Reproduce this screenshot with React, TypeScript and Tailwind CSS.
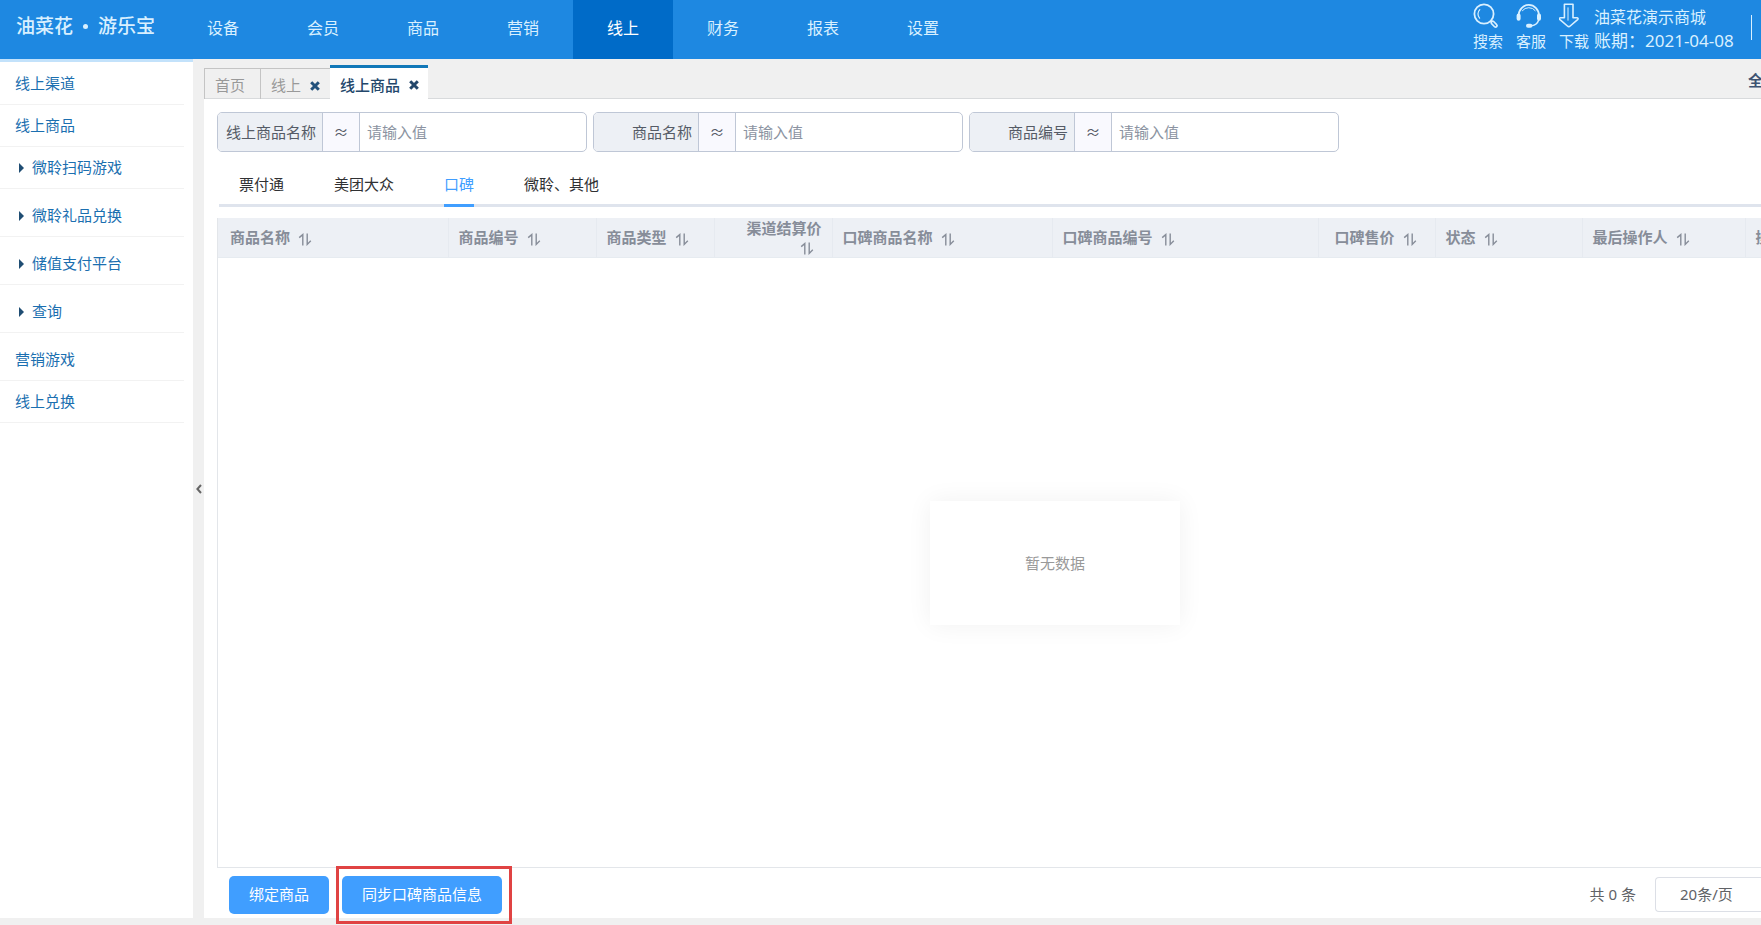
import type { ReactNode } from 'react';
import clsx from 'clsx';

const navItems = ['设备', '会员', '商品', '营销', '线上', '财务', '报表', '设置'];

const menuItems = [
  { label: '线上渠道' },
  { label: '线上商品' },
  { label: '微聆扫码游戏', arrow: true },
  { label: '微聆礼品兑换', arrow: true, spaced: true },
  { label: '储值支付平台', arrow: true, spaced: true },
  { label: '查询', arrow: true, spaced: true },
  { label: '营销游戏', spaced: true },
  { label: '线上兑换' },
];

const filters = [
  { id: 'online-name', label: '线上商品名称' },
  { id: 'name', label: '商品名称' },
  { id: 'code', label: '商品编号' },
];

const channels = ['票付通', '美团大众', '口碑', '微聆、其他'];

const columns = [
  { label: '商品名称', width: 230 },
  { label: '商品编号', width: 148 },
  { label: '商品类型', width: 118 },
  { label: '渠道结算价', width: 118, right: true },
  { label: '口碑商品名称', width: 220 },
  { label: '口碑商品编号', width: 266 },
  { label: '口碑售价', width: 117, right: true },
  { label: '状态', width: 147 },
  { label: '最后操作人', width: 163 },
  { label: '操作', width: 147 },
];

const SortIcon = () => (
  <svg width="14" height="13" viewBox="0 0 14 13" fill="none" stroke="currentColor" strokeWidth="1.4" className="inline-block align-[-3px]">
    <path d="M1.2 4.6 4.8 1.6V12.6" />
    <path d="M9.2 0.6V11.4L12.8 7.8" />
  </svg>
);

const CloseIcon = () => (
  <svg width="10" height="10" viewBox="0 0 10 10" fill="none" stroke="currentColor" strokeWidth="3">
    <path d="M1.2 1.2 8.8 8.8M8.8 1.2 1.2 8.8" />
  </svg>
);

const SearchIcon = () => (
  <svg width="26" height="26" viewBox="0 0 26 26" fill="none" stroke="currentColor">
    <circle cx="11" cy="11" r="9.6" strokeWidth="1.8" />
    <path d="M6.6 15.2A6.2 6.2 0 0 1 6.8 6.6" strokeWidth="1.2" strokeLinecap="round" />
    <path d="M17.6 17.6l2 2" strokeWidth="1.8" />
    <path d="M19.6 19.6l3 3" strokeWidth="4.6" strokeLinecap="round" />
    <path d="M19.8 19.8l2.6 2.6" stroke="#1e88e1" strokeWidth="1.4" strokeLinecap="round" />
  </svg>
);

const HeadsetIcon = () => (
  <svg width="26" height="26" viewBox="0 0 26 26" fill="none" stroke="currentColor" strokeLinecap="round">
    <path d="M2.6 12.5a10.2 10.6 0 0 1 20.4 0" strokeWidth="1.8" />
    <path d="M6.4 7.6a8.2 8.2 0 0 1 12.8 0" strokeWidth="1" />
    <path d="M2.6 12.6v3.2M23 12.6v3.2" strokeWidth="4" />
    <path d="M22.6 17.2c-1 3-3.6 5-7 5.6" strokeWidth="1.5" />
    <path d="M12 22.8h2.4" strokeWidth="4" />
  </svg>
);

const DownloadIcon = () => (
  <svg width="26" height="26" viewBox="0 0 26 26" fill="none" stroke="currentColor" strokeWidth="1.6" strokeLinejoin="round">
    <path d="M5.4 1.2h8.6v13.6h3.8c1.4 0 1.6 1 .8 1.8l-7.4 6.4c-.9.8-1.9.8-2.8 0L1 16.6c-.8-.8-.6-1.8.6-1.8h3.8z" />
    <path d="M9 4.4v13.2" strokeWidth="1" />
  </svg>
);

const ToolButton = ({ label, children }: { label: string; children: ReactNode }) => (
  <button type="button" className="flex w-[30px] flex-col items-start pt-[3px] text-[15px] leading-[24px]">
    {children}
    {label}
  </button>
);

const Header = () => (
  <header className="flex h-[59px] shrink-0 bg-[#1e88e1] text-[#d9f0ff]">
    <div className="flex w-[173px] shrink-0 items-center gap-[10px] pb-[6px] pl-4 text-[19px] font-medium">
      <span>油菜花</span>
      <span className="size-[5px] rounded-full bg-[#d9f0ff]" />
      <span>游乐宝</span>
    </div>
    <nav className="flex">
      {navItems.map((item) => (
        <a
          key={item}
          href="#"
          className={clsx(
            'flex w-[100px] items-center justify-center pb-[4px] text-base',
            item === '线上' && 'bg-[#006bc8] text-white'
          )}
        >
          {item}
        </a>
      ))}
    </nav>
    <div className="ml-auto flex shrink-0 pr-[9px]">
      <div className="flex gap-[13px]">
        <ToolButton label="搜索">
          <SearchIcon />
        </ToolButton>
        <ToolButton label="客服">
          <HeadsetIcon />
        </ToolButton>
        <ToolButton label="下载">
          <DownloadIcon />
        </ToolButton>
      </div>
      <div className="ml-[5px] w-[157px] pt-[6px] text-[17px] leading-[23px] whitespace-nowrap">
        <div className="text-base leading-[23px]">油菜花演示商城</div>
        <div>账期：2021-04-08</div>
      </div>
      <div className="mt-[15px] h-[25px] w-px bg-[#d9f0ff]" />
    </div>
  </header>
);

const Sidebar = () => (
  <aside className="w-[193px] shrink-0 border-t-[3px] border-[#c3e2fb] bg-white">
    <ul className="w-[184px] pt-px text-[15px] text-[#1b6fb0]">
      {menuItems.map((item) => (
        <li key={item.label} className={clsx('border-b border-[#f2f2f2]', item.spaced && 'pt-[6px]')}>
          <a href="#" className={clsx('flex h-[41px] items-center', item.arrow ? 'pl-[19px]' : 'pl-[15px]')}>
            {item.arrow && (
              <svg width="5" height="10" viewBox="0 0 5 10" className="mt-px mr-[8px] fill-[#1f4d73]">
                <path d="M0 0l5 5-5 5z" />
              </svg>
            )}
            {item.label}
          </a>
        </li>
      ))}
    </ul>
  </aside>
);

const PageTabs = () => (
  <div className="flex h-10 shrink-0 items-stretch bg-[#f0f0f0] text-[15px] text-[#999] shadow-[inset_0_-1px_0_#d8dadc]">
    <button type="button" className="mt-[9px] flex w-[56px] items-center border-t border-l border-[#c4c4c4] pt-[3px] pl-[10px]">
      首页
    </button>
    <button type="button" className="mt-[9px] flex w-[70px] items-center gap-[9px] border-t border-l border-[#c4c4c4] pt-[3px] pl-[10px]">
      线上
      <span className="text-[#23527c]">
        <CloseIcon />
      </span>
    </button>
    <button
      type="button"
      className="mt-[6px] flex w-[98px] items-center gap-[9px] border-t-[3px] border-[#1278b8] bg-white pt-[3px] pl-[10px] font-medium text-[#23476b]"
    >
      线上商品
      <CloseIcon />
    </button>
    <button type="button" className="mr-[-2px] ml-auto shrink-0 pb-px pt-[4px] font-bold text-[#3d5372]">
      全
    </button>
  </div>
);

const Filters = () => (
  <form className="flex flex-wrap gap-[6px] pl-[13px] text-[15px]">
    {filters.map(({ id, label }) => (
      <div key={id} className="flex h-10 w-[370px] overflow-hidden rounded-[5px] border border-[#bfc7d6]">
        <label htmlFor={id} className="flex w-[104px] shrink-0 items-center justify-end bg-[#edf0f5] pr-[6px] text-[#555b66]">
          {label}
        </label>
        <button type="button" className="w-[38px] shrink-0 border-x border-[#bfc7d6] bg-[#f9f9fe] text-[#555b66]">
          ≈
        </button>
        <input id={id} placeholder="请输入值" className="min-w-0 flex-1 px-[7px] outline-none placeholder:text-[#8b93a1]" />
      </div>
    ))}
  </form>
);

const ChannelTabs = () => (
  <div className="ml-[15px] flex h-[55px] shrink-0 gap-[50px] pl-5 text-[15px] text-[#303133] shadow-[inset_0_-3px_0_#dfe4ed]">
    {channels.map((channel) => (
      <button
        key={channel}
        type="button"
        className={clsx(
          'border-b-[3px] pt-[13px]',
          channel === '口碑' ? 'border-[#409eff] text-[#409eff]' : 'border-transparent'
        )}
      >
        {channel}
      </button>
    ))}
  </div>
);

const ProductTable = () => (
  <div className="mt-[11px] ml-[13px] flex min-h-0 flex-1 overflow-hidden border-b border-l border-[#e3e6ea]">
    <div className="flex w-[1674px] shrink-0 flex-col">
      <table className="w-full table-fixed border-collapse bg-[#edf0f5] text-[15px] text-[#878d99]">
        <colgroup>
          {columns.map((col) => (
            <col key={col.label} style={{ width: col.width }} />
          ))}
        </colgroup>
        <thead>
          <tr className="h-[39px] border-b border-[#e6ebf0]">
            {columns.map((col) => (
              <th
                key={col.label}
                className={clsx(
                  'border-r border-[#e6eaf0] px-[10px] py-0 leading-[18px] font-bold first:pl-3',
                  col.right ? 'text-right' : 'text-left'
                )}
              >
                {col.label}
                <span className="inline-block px-2">
                  <SortIcon />
                </span>
              </th>
            ))}
          </tr>
        </thead>
      </table>
      <div className="flex flex-1 items-center justify-center pt-[2px]">
        <div className="flex h-[124px] w-[250px] items-center justify-center text-[15px] text-[#999] shadow-[0_0_24px_rgba(0,0,0,0.06)]">
          暂无数据
        </div>
      </div>
    </div>
  </div>
);

const Footer = () => (
  <div className="flex h-[50px] shrink-0 items-center pt-[3px] pl-[25px] text-[15px] text-[#606266]">
    <button type="button" className="h-[38px] w-[100px] rounded-[5px] bg-[#409eff] text-white">
      绑定商品
    </button>
    <div className="relative ml-[13px]">
      <button type="button" className="h-[38px] w-[160px] rounded-[5px] bg-[#409eff] text-white">
        同步口碑商品信息
      </button>
      <div className="pointer-events-none absolute -top-[10px] -right-[10px] -bottom-[10px] -left-[6px] border-[3px] border-[#e04343]" />
    </div>
    <span className="ml-auto">共 0 条</span>
    <select
      aria-label="每页条数"
      className="ml-[19px] h-[35px] w-[106px] shrink-0 appearance-none rounded-l-[4px] border border-r-0 border-[#dcdfe6] bg-white pl-6 outline-none"
    >
      <option>20条/页</option>
    </select>
  </div>
);

const App = () => (
  <div className="flex h-screen flex-col overflow-hidden bg-[#f0f0f0] font-['Noto_Sans','Noto_Sans_CJK_SC',sans-serif]">
    <Header />
    <div className="flex min-h-0 flex-1 pb-[7px]">
      <Sidebar />
      <button type="button" aria-label="收起菜单" className="flex w-[11px] shrink-0 items-center justify-center text-[#666]">
        <svg width="6" height="10" viewBox="0 0 6 10" fill="none" stroke="currentColor" strokeWidth="2">
          <path d="M5 1 1.4 5 5 9" />
        </svg>
      </button>
      <main className="flex min-w-0 flex-1 flex-col bg-white">
        <PageTabs />
        <div className="flex min-h-0 flex-1 flex-col pt-[13px]">
          <Filters />
          <ChannelTabs />
          <ProductTable />
          <Footer />
        </div>
      </main>
    </div>
  </div>
);

export default App;
